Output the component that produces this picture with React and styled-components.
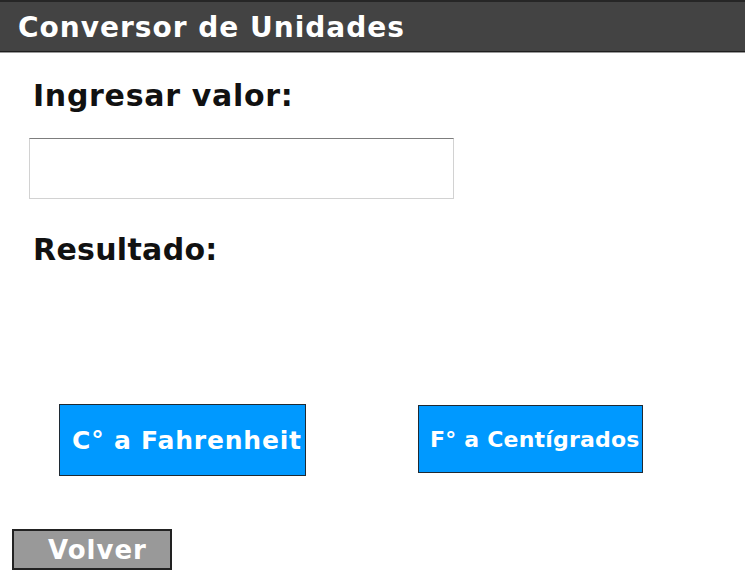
import React from "react";
import styled, { createGlobalStyle } from "styled-components";

const Global = createGlobalStyle`
  html, body { margin: 0; padding: 0; background: #ffffff; }
  body { font-family: "DejaVu Sans", Verdana, sans-serif; }
  * { box-sizing: border-box; }
`;

const Page = styled.div`
  width: 745px;
  height: 574px;
  display: flex;
  flex-direction: column;
  overflow: hidden;
`;

const Header = styled.header`
  height: 52px;
  background: #434343;
  border-top: 2px solid #262626;
  border-bottom: 1px solid #1e1e1e;
  box-shadow: 0 1px 0 #9a9a9a;
  display: flex;
  align-items: center;
  padding-left: 18px;
  padding-top: 2px;
`;

const Title = styled.h1`
  margin: 0;
  color: #ffffff;
  font-size: 28px;
  font-weight: bold;
  letter-spacing: 1px;
  line-height: 1;
`;

const Main = styled.main`
  display: flex;
  flex-direction: column;
  align-items: flex-start;
`;

const Label = styled.h2`
  margin: ${(p) => p.$top}px 0 0 33px;
  font-size: 30px;
  line-height: 36px;
  font-weight: bold;
  color: #111111;
  letter-spacing: ${(p) => p.$spacing || 0}px;
`;

const Input = styled.input`
  margin: 24px 0 0 29px;
  width: 425px;
  height: 61px;
  border: 1px solid #d2d2d2;
  border-top-color: #7d7d7d;
  background: #ffffff;
  outline: none;
  font-family: inherit;
  font-size: 20px;
`;

const ButtonRow = styled.div`
  display: flex;
  align-items: flex-start;
  gap: 112px;
  margin-top: 136px;
  padding-left: 59px;
`;

const ConvertButton = styled.button`
  width: ${(p) => p.$w}px;
  height: ${(p) => p.$h}px;
  margin-top: ${(p) => p.$offset || 0}px;
  background: #0099ff;
  border: 1px solid #1f2a33;
  color: #ffffff;
  font-family: "DejaVu Sans", Verdana, sans-serif;
  font-weight: bold;
  font-size: ${(p) => p.$size}px;
  letter-spacing: ${(p) => p.$spacing}px;
  padding: 0 0 0 ${(p) => p.$pad}px;
  text-align: left;
  white-space: nowrap;
  overflow: visible;
  cursor: pointer;
`;

const BackButton = styled.button`
  margin: 53px 0 0 12px;
  width: 160px;
  height: 41px;
  background: #999999;
  border: 2px solid #222222;
  color: #ffffff;
  font-family: "DejaVu Sans", Verdana, sans-serif;
  font-weight: bold;
  font-size: 26px;
  letter-spacing: 1px;
  padding: 0 0 0 34px;
  text-align: left;
  line-height: 1;
  cursor: pointer;
`;

export default function App() {
  return (
    <>
      <Global />
      <Page>
        <Header>
          <Title>Conversor de Unidades</Title>
        </Header>
        <Main>
          <Label $top={26} $spacing={0.7}>Ingresar valor:</Label>
          <Input type="text" />
          <Label $top={33} $spacing={0.3}>Resultado:</Label>
          <ButtonRow>
            <ConvertButton $w={247} $h={72} $size={25} $spacing={0.8} $pad={12}>
              C° a Fahrenheit
            </ConvertButton>
            <ConvertButton $w={225} $h={68} $offset={1} $size={22} $spacing={0.2} $pad={11}>
              F° a Centígrados
            </ConvertButton>
          </ButtonRow>
          <BackButton>Volver</BackButton>
        </Main>
      </Page>
    </>
  );
}
